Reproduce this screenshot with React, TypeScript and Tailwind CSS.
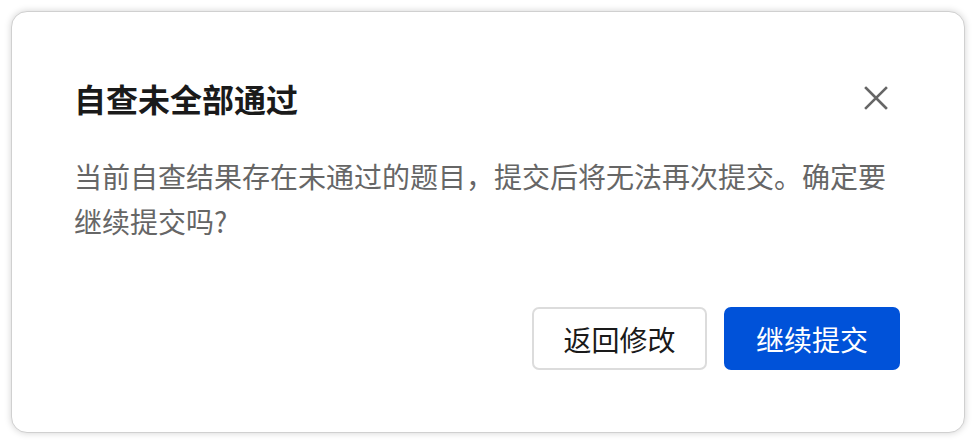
export default function App() {
  return (
    <div
      className="w-[976px] h-[444px] bg-white p-[11px]"
      style={{ fontFamily: '"Noto Sans CJK SC", "Noto Sans", sans-serif' }}
    >
      <div className="flex flex-col w-[954px] h-[422px] rounded-[16px] border border-[#d0d0d0] bg-white shadow-[0_0_7px_rgba(0,0,0,0.18)] pl-[62px] pr-[64px] pt-[62px] pb-[62px]">
        {/* Header */}
        <div className="flex items-center justify-between h-[48px]">
          <h2 className="text-[32px] leading-[48px] font-semibold text-[#1a1a1a]">自查未全部通过</h2>
          <button className="flex items-center justify-center w-[24px] h-[24px] mr-[12px]" aria-label="关闭">
            <svg width="24" height="24" viewBox="0 0 24 24" fill="none">
              <path d="M2 2L22 22M22 2L2 22" stroke="#666666" strokeWidth="2.6" strokeLinecap="square" />
            </svg>
          </button>
        </div>

        {/* Body */}
        <p className="mt-[32px] text-[28px] leading-[45px] text-[#666666]">
          当前自查结果存在未通过的题目，提交后将无法再次提交。确定要继续提交吗?
        </p>

        {/* Footer */}
        <div className="mt-auto flex justify-end gap-[17px]">
          <button className="h-[63px] w-[175px] rounded-[7px] border-2 border-[#dcdcdc] bg-white text-[28px] text-[#1a1a1a]">
            返回修改
          </button>
          <button className="h-[63px] w-[176px] rounded-[7px] border-2 border-[#0052d9] bg-[#0052d9] text-[28px] text-white">
            继续提交
          </button>
        </div>
      </div>
    </div>
  );
}
